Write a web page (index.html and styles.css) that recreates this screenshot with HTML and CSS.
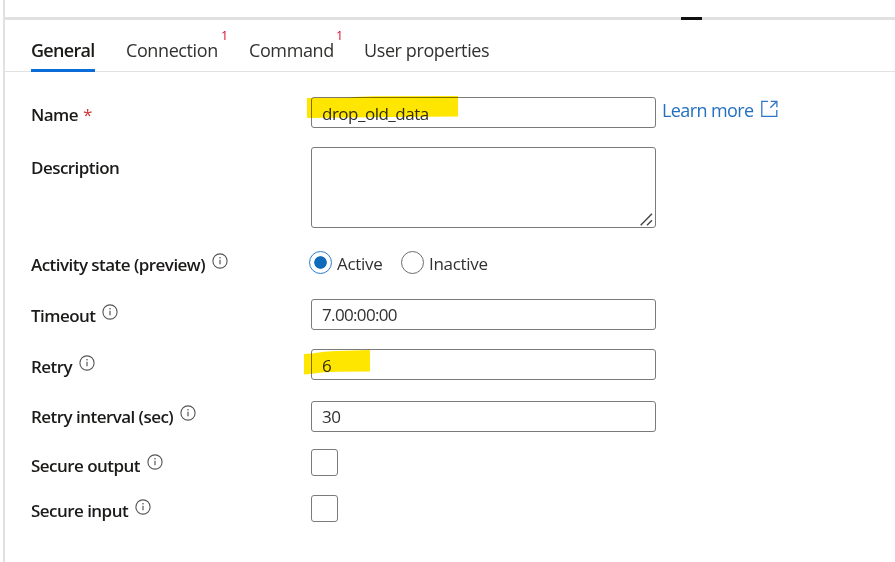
FILE: index.html
```html
<!DOCTYPE html>
<html lang="en">
<head>
<meta charset="utf-8">
<title>Activity settings</title>
<link rel="stylesheet" href="styles.css">
</head>
<body>
<svg class="defs" width="0" height="0"><symbol id="info" viewBox="0 0 16 16"><circle cx="8" cy="8" r="7.1" fill="none" stroke="#555" stroke-width="1.1"/><path d="M8 6.7v4.6" stroke="#555" stroke-width="1.2"/><circle cx="8" cy="4.8" r=".8" fill="#555"/></symbol></svg>
<main class="panel">
  <div class="splitter"><span class="grip"></span></div>
  <nav class="tabs">
    <a class="tab active">General</a>
    <a class="tab connection">Connection<sup class="badge">1</sup></a>
    <a class="tab command">Command<sup class="badge">1</sup></a>
    <a class="tab props">User properties</a>
  </nav>
  <form class="form">
    <div class="row name">
      <label class="label">Name <span class="required">*</span></label>
      <div class="field"><span class="value drop">drop_old_data</span>
        <svg class="mark mark-name" width="152" height="24" viewBox="0 0 152 24"><path d="M0 2L42 1.7Q52 .4 66 .3L151 0V20.5L82 21L0 22Z" fill="#ffe600"/></svg>
      </div>
      <a class="link"><span class="link-text">Learn more</span><svg width="17" height="18" viewBox="0 0 17 18" fill="none" stroke="#2f77c5" stroke-width="1.3"><path d="M7 1.3H.8V16.4H15.8V10M9.8 1.3H15.9V7.2M15.7 1.5L9.3 7.8"/></svg></a>
    </div>
    <div class="row description">
      <label class="label">Description</label>
      <div class="field area"><svg class="resize" width="13" height="13" viewBox="0 0 13 13"><path d="M.7 12.2L12 .8M7 12.2L12 7.2" stroke="#444" stroke-width="1.4"/></svg></div>
    </div>
    <div class="row state">
      <label class="label"><span>Activity state (preview)</span><svg class="info"><use href="#info"/></svg></label>
      <div class="radios">
        <span class="radio on"></span><span class="choice c-active">Active</span>
        <span class="radio"></span><span class="choice">Inactive</span>
      </div>
    </div>
    <div class="row timeout">
      <label class="label"><span>Timeout</span><svg class="info"><use href="#info"/></svg></label>
      <div class="field"><span class="value time">7.00:00:00</span></div>
    </div>
    <div class="row retry">
      <label class="label"><span>Retry</span><svg class="info"><use href="#info"/></svg></label>
      <div class="field"><span class="value low">6</span>
        <svg class="mark mark-retry" width="67" height="26" viewBox="0 0 67 26"><path d="M0 4L8 3.6Q20 1 32 1L66 0V21.5L34 21.8Q20 22 10 23.5L0 24.5Z" fill="#ffe600"/></svg>
      </div>
    </div>
    <div class="row interval">
      <label class="label"><span>Retry interval (sec)</span><svg class="info"><use href="#info"/></svg></label>
      <div class="field"><span class="value">30</span></div>
    </div>
    <div class="row output">
      <label class="label"><span>Secure output</span><svg class="info"><use href="#info"/></svg></label>
      <span class="check"></span>
    </div>
    <div class="row input">
      <label class="label"><span>Secure input</span><svg class="info"><use href="#info"/></svg></label>
      <span class="check"></span>
    </div>
  </form>
</main>
</body>
</html>
```
FILE: styles.css
```css
* { box-sizing: border-box; }
body { margin: 0; background: #fff; color: #323130; font: 17px/24px "Open Sans", "Noto Sans", sans-serif; overflow: hidden; }
.defs { display: block; }
.panel { height: 562px; margin-left: 3px; border-left: 2px solid #e1e1e1; }
.splitter { height: 20px; padding-top: 17px; }
.splitter::after { content: ""; display: block; height: 3px; margin-top: -3px; background: #e1e1e1; }
.grip { display: block; position: relative; z-index: 1; width: 21px; height: 3px; margin-left: 676px; background: #111; }
.tabs { display: flex; height: 52px; padding: 0 0 0 26px; border-bottom: 1px solid #e1e1e1; }
.tab { position: relative; height: 52px; padding-top: 18px; margin-right: 31px; font-size: 18px; letter-spacing: -.4px; white-space: nowrap; }
.tab.active { width: 64px; font-weight: 600; color: #1b1a19; border-bottom: 3px solid #0a6cd6; letter-spacing: -.7px; }
.connection { width: 92px; }
.command { width: 84px; }
.badge { position: absolute; left: calc(100% + 3px); top: 8px; font-size: 12.5px; line-height: 16px; font-weight: 500; color: #d90b2b; }
.form { padding: 25px 0 0 26px; }
.row { display: flex; align-items: flex-start; }
.label { display: flex; width: 280px; flex: none; font-weight: 600; color: #1b1a19; white-space: nowrap; letter-spacing: -.54px; }
.required { margin-left: 5px; color: #d13438; font-weight: 400; }
.info { width: 16px; height: 16px; margin: 0 0 0 7px; }
.field { position: relative; width: 345px; height: 31px; padding: 3px 10px; border: 1px solid #7d7b79; border-radius: 3px; white-space: nowrap; }
.value { position: relative; letter-spacing: -.5px; }
.drop, .low { top: 1px; }
.time { letter-spacing: -.65px; }
.mark { position: absolute; mix-blend-mode: multiply; }
.mark-name { left: -5px; top: -2px; }
.mark-retry { left: -8px; top: 0; }
.name { height: 50px; }
.name .label { padding-top: 6px; }
.link { display: flex; margin: 1px 0 0 6px; color: #2470bf; font-size: 18px; letter-spacing: -.6px; white-space: nowrap; }
.link-text { width: 91px; }
.link svg { margin: 2px 0 0 8px; }
.description { height: 104px; }
.description .label { padding-top: 9px; }
.area { height: 81px; }
.resize { position: absolute; right: 2px; bottom: 1px; }
.state { height: 48px; }
.state .label { padding-top: 2px; }
.radios { display: flex; margin-left: -2px; letter-spacing: -.3px; }
.radio { width: 23px; height: 23px; border: 1px solid #6e6d6c; border-radius: 50%; }
.radio.on { border-color: #2b7cd3; background: radial-gradient(circle, #0f6cbd 0 5.9px, transparent 6.6px); }
.choice { margin-left: 5px; padding-top: 1px; }
.c-active { width: 64px; }
.timeout { height: 50px; }
.timeout .label { padding-top: 5px; }
.retry { height: 52px; }
.retry .label { padding-top: 6px; }
.interval { height: 48px; }
.interval .label { padding-top: 4px; }
.output { height: 46px; }
.output .label { padding-top: 5px; }
.input .label { padding-top: 4px; }
.check { width: 27px; height: 27px; border: 1px solid #7d7b79; border-radius: 3px; }
```
